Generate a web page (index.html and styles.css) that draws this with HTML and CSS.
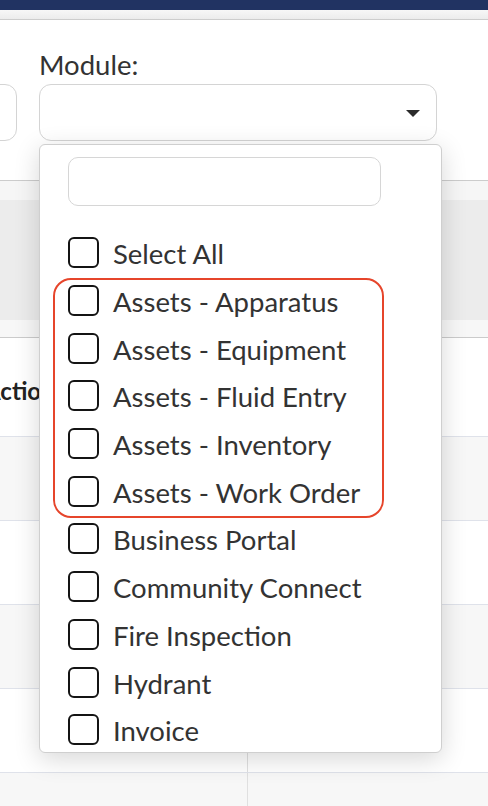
FILE: index.html
```html
<!DOCTYPE html>
<html lang="en">
<head>
  <meta charset="UTF-8" />
  <meta name="viewport" content="width=device-width, initial-scale=1.0"/>
  <title>Reports — Module filter</title>
  <link rel="stylesheet" href="styles.css">
</head>
<body>

<header class="topbar"></header>
<div class="subbar"></div>

<section class="filters">
  <div class="field field-prev">
    <label>Status:</label>
    <div class="select"><span class="caret"></span></div>
  </div>

  <div class="field field-module">
    <label>Module:</label>
    <div class="select"><span class="caret"></span></div>

    <!-- open dropdown -->
    <div class="dropdown">
      <input class="dd-search" type="text">
      <ul class="dd-list">
        <li><span class="box"></span>Select All</li>
        <li><span class="box"></span>Assets - Apparatus</li>
        <li><span class="box"></span>Assets - Equipment</li>
        <li><span class="box"></span>Assets - Fluid Entry</li>
        <li><span class="box"></span>Assets - Inventory</li>
        <li><span class="box"></span>Assets - Work Order</li>
        <li><span class="box"></span>Business Portal</li>
        <li><span class="box"></span>Community Connect</li>
        <li><span class="box"></span>Fire Inspection</li>
        <li><span class="box"></span>Hydrant</li>
        <li><span class="box"></span>Invoice</li>
      </ul>
      <div class="highlight"></div>
    </div>
  </div>
</section>

<section class="table">
  <div class="band"></div>
  <div class="thead"></div>
  <div class="band band-bottom"></div>

  <div class="row row-head">
    <div class="cell"><span class="col-title">Action</span></div>
    <div class="cell"></div>
  </div>
  <div class="row alt"><div class="cell"></div><div class="cell"></div></div>
  <div class="row"><div class="cell"></div><div class="cell"></div></div>
  <div class="row alt"><div class="cell"></div><div class="cell"></div></div>
  <div class="row"><div class="cell"></div><div class="cell"></div></div>
  <div class="row alt row-last"><div class="cell"></div><div class="cell"></div></div>
</section>

</body>
</html>
```

FILE: styles.css
```css
* { box-sizing: border-box; margin: 0; padding: 0; }
body {
  font-family: Lato, 'Open Sans', sans-serif;
  color: #333;
  background: #fff;
  height: 806px;
  overflow: hidden;
}

.topbar {
  height: 10px;
  background: #213362;
}

.subbar {
  height: 10px;
  background: linear-gradient(#f7f7f7, #ececec);
  border-bottom: 1px solid #cdcdcd;
}

.filters {
  display: flex;
  gap: 22px;
  height: 161px;
  padding-top: 28px;
  background: #fff;
  border-bottom: 1px solid #cccccc;
}

.field label {
  display: block;
  font-size: 27.5px;
  line-height: 1.2;
  color: #333;
  margin-bottom: 3px;
}

.field-prev { width: 150px; margin-left: -133px; }
.field-prev label { visibility: hidden; }

.field-module { position: relative; width: 398px; }

.select {
  position: relative;
  height: 57px;
  border: 1.5px solid #d4d4d4;
  border-radius: 12px;
  background: #fff;
}

.caret {
  position: absolute;
  right: 16px;
  top: 25px;
  width: 0;
  height: 0;
  border-left: 7px solid transparent;
  border-right: 7px solid transparent;
  border-top: 7px solid #2b2b2b;
}

.dropdown {
  position: absolute;
  top: 96px;
  left: 0;
  width: 403px;
  height: 609px;
  background: #fff;
  border: 1px solid #cfcfcf;
  border-radius: 6px;
  box-shadow: 0 6px 26px rgba(0,0,0,0.16);
  padding: 12px 0 0 28px;
  overflow: hidden;
  z-index: 5;
}

.dd-search {
  display: block;
  width: 313px;
  height: 49px;
  border: 1.5px solid #d6d6d6;
  border-radius: 10px;
  outline: none;
  background: #fff;
  margin-bottom: 23px;
}

.dd-list { list-style: none; }

.dd-list li {
  display: flex;
  align-items: center;
  height: 47.7px;
  font-size: 27.5px;
  line-height: 1.2;
  color: #333;
  padding-top: 2px;
}

.box {
  flex: none;
  width: 31px;
  height: 31px;
  border: 2.5px solid #141414;
  border-radius: 6px;
  margin-right: 14px;
  margin-top: -2px;
}

.highlight {
  position: absolute;
  left: 13px;
  top: 133px;
  width: 331px;
  height: 240px;
  border: 2.5px solid #e6452b;
  border-radius: 18px;
}

.band { height: 19px; background: #f6f6f6; }
.thead { height: 120px; background: #ececec; }
.band-bottom {
  height: 18px;
  background: #f7f7f7;
  border-bottom: 1px solid #cbcbcb;
}

.row {
  display: flex;
  height: 84px;
  border-bottom: 1px solid #dfe2ea;
  background: #fff;
}
.row.alt { background: #f7f7f7; }
.row-last { height: 33px; border-bottom: none; }

.row-head {
  height: 99px;
  align-items: center;
}

.cell { height: 100%; }
.cell:first-child {
  width: 248px;
  border-right: 1.5px solid #e0e0e0;
  display: flex;
  align-items: center;
}

.col-title {
  font-size: 24px;
  font-weight: 700;
  color: #222;
  margin-left: -16px;
  padding-top: 6px;
}
```
